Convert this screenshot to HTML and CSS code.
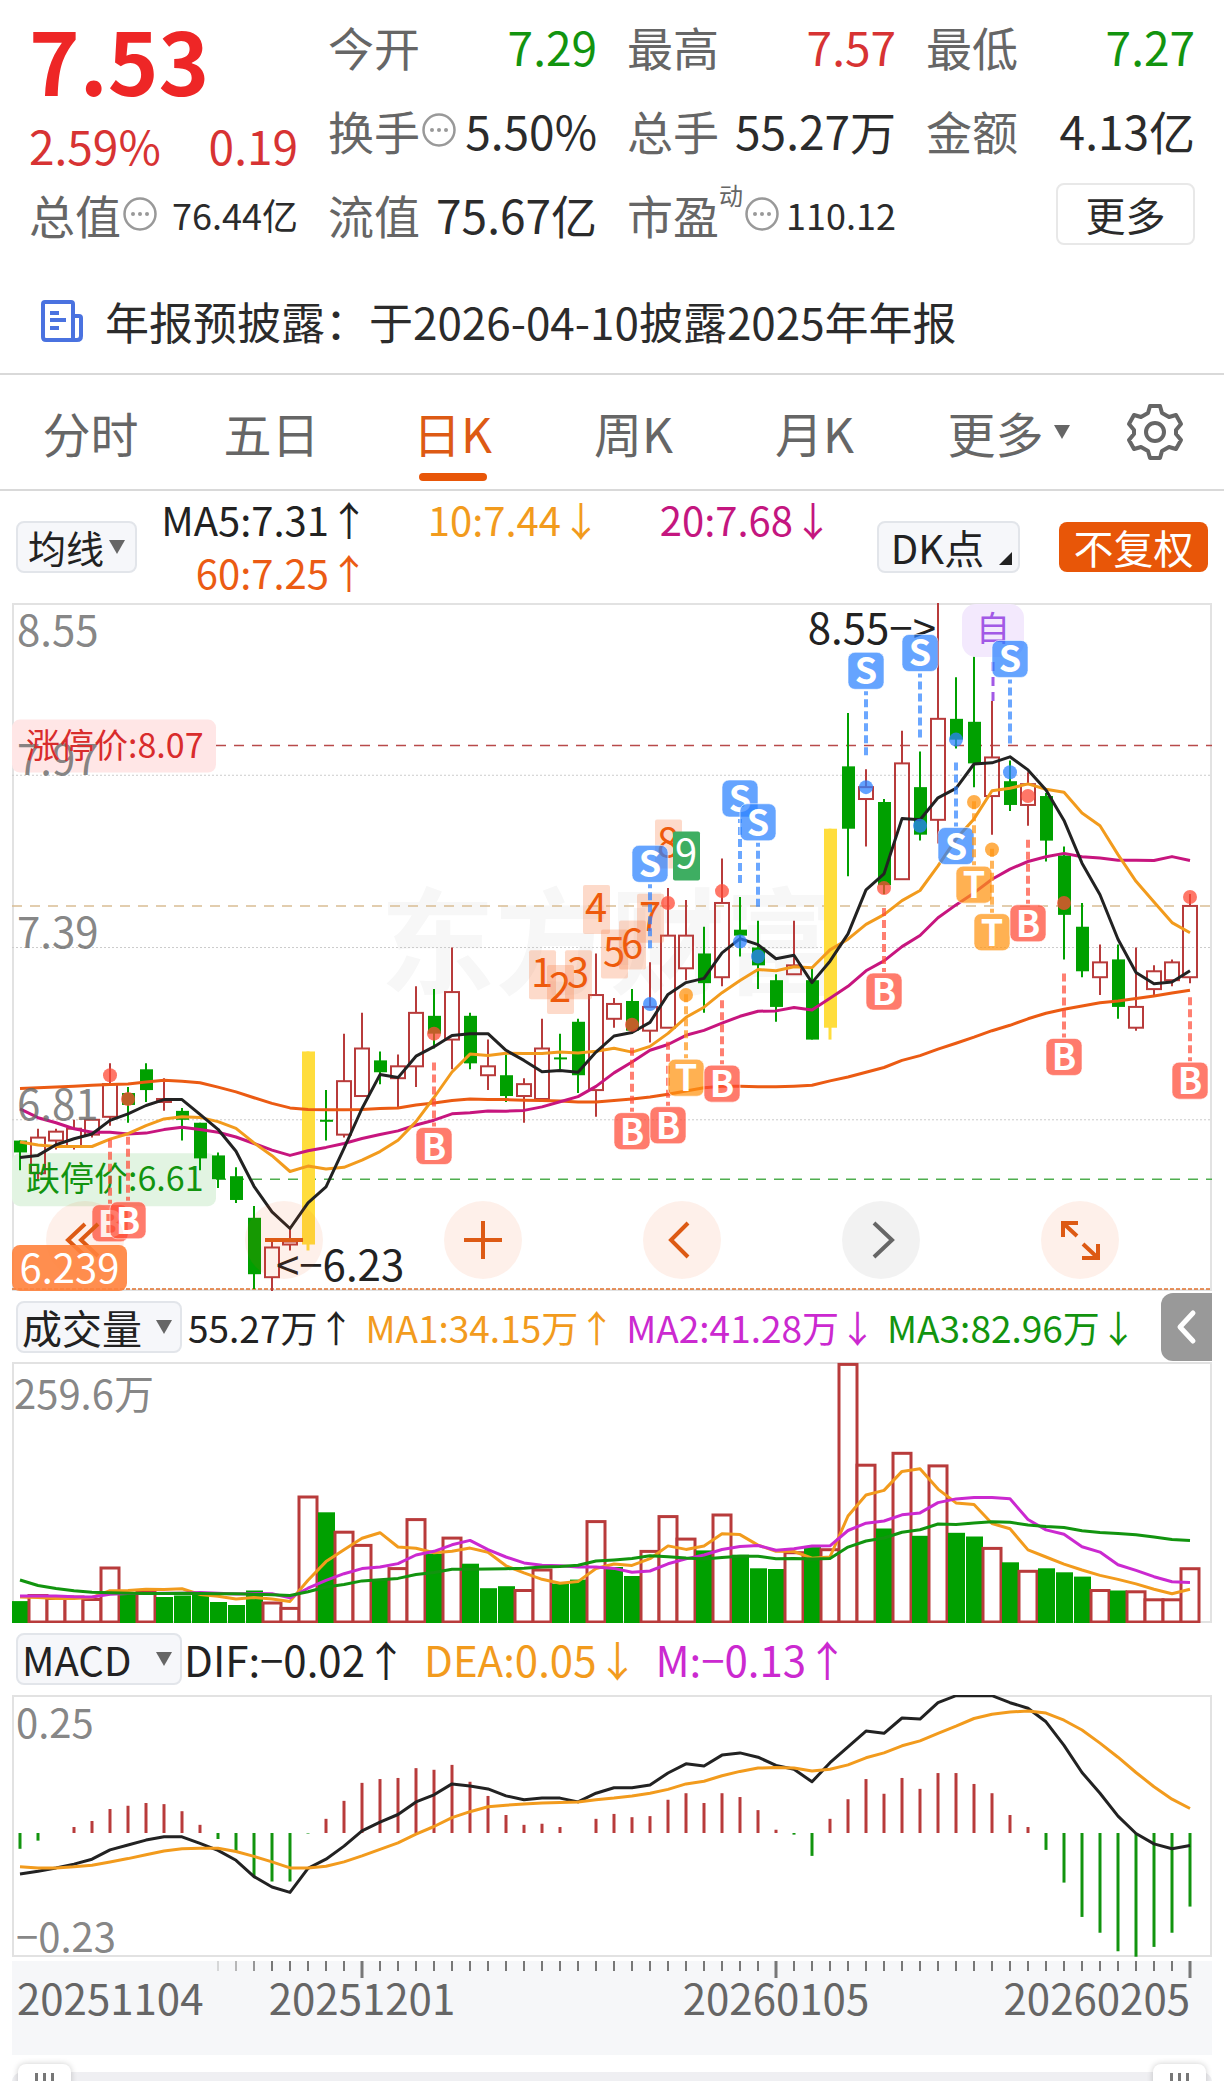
FILE: index.html
```html
<!DOCTYPE html>
<html lang="zh-CN">
<head>
    <meta charset="UTF-8">
    <meta name="viewport" content="width=device-width, initial-scale=1.0">
    <title>日K</title>
    <link rel="stylesheet" href="styles.css">
</head>
<body>
    <svg class="defs" width="0" height="0">
        <symbol id="dots" viewBox="0 0 34 34">
            <circle cx="17" cy="17" r="15.5" fill="none" stroke="#999" stroke-width="2.5"/>
            <circle cx="10" cy="17" r="2" fill="#999"/>
            <circle cx="17" cy="17" r="2" fill="#999"/>
            <circle cx="24" cy="17" r="2" fill="#999"/>
        </symbol>
    </svg>

    <header class="quote">
        <div class="price-box">
            <div class="price">7.53</div>
            <div class="change"><span>2.59%</span><span>0.19</span></div>
        </div>
        <div class="cell"><span class="label">今开</span><span class="down">7.29</span></div>
        <div class="cell"><span class="label">最高</span><span class="up">7.57</span></div>
        <div class="cell"><span class="label">最低</span><span class="down">7.27</span></div>
        <div class="cell"><span class="label">换手<svg class="dots"><use href="#dots"/></svg></span><span>5.50%</span></div>
        <div class="cell"><span class="label">总手</span><span>55.27万</span></div>
        <div class="cell"><span class="label">金额</span><span>4.13亿</span></div>
        <div class="cell"><span class="label">总值<svg class="dots"><use href="#dots"/></svg></span><span class="small">76.44亿</span></div>
        <div class="cell"><span class="label">流值</span><span>75.67亿</span></div>
        <div class="cell"><span class="label">市盈<span class="sup">动</span><svg class="dots"><use href="#dots"/></svg></span><span class="small">110.12</span></div>
        <div class="cell end"><button class="more">更多</button></div>
    </header>

    <a class="notice" href="#">
        <svg width="42" height="42" viewBox="0 0 42 42" fill="none" stroke="#4a72e0" stroke-width="4" stroke-linejoin="round">
            <path d="M32 38V4Q32 2 30 2H4Q2 2 2 4V37Q2 40 5 40H36Q40 40 40 36V18Q40 16 38 16H33"/>
            <path d="M9 13H18M9 20H25M9 28H18"/>
        </svg>
        <span>年报预披露：于2026-04-10披露2025年年报</span>
    </a>

    <nav class="tabs">
        <button>分时</button>
        <button>五日</button>
        <button class="active">日K</button>
        <button>周K</button>
        <button>月K</button>
        <button>更多<i class="caret"></i></button>
        <button aria-label="设置">
            <svg width="58" height="58" viewBox="0 0 58 58" fill="none" stroke="#666" stroke-width="4" stroke-linejoin="round">
                <path d="M24 3H34L36 10L43 14L50 12L55 21L50 27V31L55 37L50 46L43 44L36 48L34 55H24L22 48L15 44L8 46L3 37L8 31V27L3 21L8 12L15 14L22 10Z"/>
                <circle cx="29" cy="29" r="9"/>
            </svg>
        </button>
    </nav>

    <section class="ma-bar">
        <span class="dropdown"><select aria-label="均线"><option>均线</option></select></span>
        <div class="ma-list">
            <span class="c-black">MA5:7.31↑</span>
            <span class="c-orange">10:7.44↓</span>
            <span class="c-pink">20:7.68↓</span>
            <span class="c-deep">60:7.25↑</span>
        </div>
        <button class="dk">DK点</button>
        <button class="adjust">不复权</button>
    </section>

    <section class="chart">
        <svg id="kline" viewBox="0 0 1200 688"></svg>
        <div class="tools">
            <button aria-label="最早"><svg viewBox="0 0 78 78"><path d="M39 23L22 39L39 55M52 23L35 39L52 55"/></svg></button>
            <button aria-label="缩小"><svg viewBox="0 0 78 78"><path d="M20 39H58"/></svg></button>
            <button aria-label="放大"><svg viewBox="0 0 78 78"><path d="M20 39H58M39 20V58"/></svg></button>
            <button aria-label="向左"><svg viewBox="0 0 78 78"><path d="M45 22L28 39L45 56"/></svg></button>
            <button class="off" aria-label="向右"><svg viewBox="0 0 78 78"><path d="M32 22L50 39L32 56"/></svg></button>
            <button aria-label="全屏"><svg viewBox="0 0 78 78"><path d="M22 36V22H37M22 22L36 35M57 43V57H41M57 57L42 43"/></svg></button>
        </div>
        <span class="low-tag">6.239</span>
    </section>

    <section class="sub-bar volume-bar">
        <span class="dropdown wide"><select aria-label="副图一"><option>成交量</option></select></span>
        <span class="c-black">55.27万↑</span>
        <span class="c-orange">MA1:34.15万↑</span>
        <span class="c-violet">MA2:41.28万↓</span>
        <span class="c-green">MA3:82.96万↓</span>
        <button class="drawer" aria-label="展开">
            <svg width="24" height="36" viewBox="0 0 24 36" fill="none" stroke="#fff" stroke-width="5" stroke-linecap="round" stroke-linejoin="round"><path d="M18 4L5 18L18 32"/></svg>
        </button>
    </section>
    <section class="chart"><svg id="volume" viewBox="0 0 1200 261"></svg></section>

    <section class="sub-bar macd-bar">
        <span class="dropdown wide"><select aria-label="副图二"><option>MACD</option></select></span>
        <span class="c-black">DIF:−0.02↑</span>
        <span class="c-orange">DEA:0.05↓</span>
        <span class="c-violet">M:−0.13↑</span>
    </section>
    <section class="chart"><svg id="macd" viewBox="0 0 1200 262"></svg></section>

    <section class="chart axis"><svg id="axis" viewBox="0 0 1200 94"></svg></section>

    <div class="range">
        <div class="track">
            <button class="handle" aria-label="起点"><i></i><i></i><i></i></button>
            <button class="handle" aria-label="终点"><i></i><i></i><i></i></button>
        </div>
    </div>

    <script src="charts.js"></script>
</body>
</html>
```

FILE: styles.css
```css
* {
    box-sizing: border-box;
}
body {
    margin: 0;
    background: #fff;
    color: #2b2b2b;
    font-family: "Noto Sans CJK SC", sans-serif;
    font-size: 40px;
    line-height: 1;
}
button, select {
    font: inherit;
    color: inherit;
    border: none;
    background: none;
    padding: 0;
    margin: 0;
    cursor: pointer;
}
svg {
    display: block;
}
.defs {
    position: absolute;
}
.c-black { color: #222; }
.c-orange { color: #f29b1d; }
.c-pink { color: #c4167f; }
.c-deep { color: #eb5b13; }
.c-violet { color: #cb29d0; }
.c-green { color: #12940f; }

/* quote header */
.quote {
    display: grid;
    grid-template-columns: repeat(4, 1fr);
    grid-auto-rows: 84px;
    column-gap: 30px;
    padding: 4px 29px 0;
    font-size: 46px;
}
.price-box {
    grid-row: span 2;
    display: flex;
    flex-direction: column;
    justify-content: space-between;
    padding: 12px 0 4px;
    color: #d73333;
}
.price {
    color: #ee2626;
    font-size: 86px;
    font-weight: 700;
}
.change {
    display: flex;
    justify-content: space-between;
}
.cell {
    display: flex;
    align-items: center;
    justify-content: space-between;
    white-space: nowrap;
}
.cell.end {
    justify-content: flex-end;
}
.label {
    display: flex;
    align-items: center;
    color: #666;
}
.dots {
    width: 34px;
    height: 34px;
    margin-left: 2px;
}
.sup {
    align-self: flex-start;
    margin-top: -8px;
    font-size: 24px;
}
.small {
    font-size: 36px;
}
.up { color: #d73333; }
.down { color: #12940f; }
.more {
    width: 139px;
    height: 62px;
    border: 2px solid #e8e8e8;
    border-radius: 8px;
    font-size: 40px;
    line-height: 54px;
}

/* notice */
.notice {
    display: flex;
    align-items: center;
    gap: 22px;
    height: 117px;
    padding: 12px 41px 0;
    color: #2b2b2b;
    font-size: 44px;
    text-decoration: none;
    white-space: nowrap;
}

/* period tabs */
.tabs {
    display: grid;
    grid-template-columns: repeat(5, 181fr) 207fr 86fr;
    height: 118px;
    padding-right: 26px;
    border-top: 2px solid #d9d9d9;
    border-bottom: 2px solid #d9d9d9;
    color: #666;
    font-size: 48px;
}
.tabs button {
    position: relative;
    display: flex;
    align-items: center;
    justify-content: center;
}
.tabs .active {
    color: #dd5a14;
}
.tabs .active::after {
    content: "";
    position: absolute;
    bottom: 8px;
    width: 68px;
    height: 8px;
    border-radius: 4px;
    background: #e85608;
}
.caret, .dropdown::after {
    content: "";
    border: 8px solid transparent;
    border-top: 14px solid #666;
    border-bottom: none;
}
.caret {
    margin-left: 10px;
}

/* indicator rows */
.dropdown {
    display: flex;
    align-items: center;
    justify-content: space-between;
    width: 121px;
    height: 52px;
    padding: 0 10px;
    border: 2px solid #e2e5ea;
    border-radius: 8px;
    background: #f6f7fa;
    color: #222;
    font-size: 38px;
}
.dropdown select {
    appearance: none;
    line-height: 48px;
}
.dropdown::after {
    pointer-events: none;
}
.dropdown.wide {
    width: 166px;
    padding: 0 8px 0 4px;
    font-size: 40px;
}
.ma-bar {
    display: flex;
    align-items: center;
    height: 112px;
    padding: 0 16px;
}
.ma-list {
    flex: 1;
    display: grid;
    grid-template-columns: repeat(3, 232px);
    justify-content: start;
    row-gap: 13px;
    padding-bottom: 4px;
    font-size: 40px;
    text-align: right;
    white-space: nowrap;
}
.dk {
    position: relative;
    width: 143px;
    height: 52px;
    padding-right: 22px;
    border: 2px solid #e2e5ea;
    border-radius: 8px;
    background: #f6f7fa;
    color: #222;
    line-height: 44px;
}
.dk::after {
    content: "";
    position: absolute;
    right: 6px;
    bottom: 6px;
    border-left: 13px solid transparent;
    border-bottom: 13px solid #222;
}
.adjust {
    width: 149px;
    height: 50px;
    margin-left: 39px;
    border-radius: 8px;
    background: #e85608;
    color: #fff;
    line-height: 46px;
}
.sub-bar {
    position: relative;
    display: flex;
    align-items: center;
    height: 72px;
    padding: 0 12px 0 16px;
    line-height: 44px;
    white-space: nowrap;
}
.volume-bar {
    gap: 11px;
    height: 71px;
    font-size: 37px;
}
.volume-bar .dropdown {
    margin-right: -5px;
}
.macd-bar {
    gap: 17px;
    font-size: 42px;
}
.macd-bar .dropdown {
    margin-right: -15px;
}
.drawer {
    position: absolute;
    right: 12px;
    top: 2px;
    display: flex;
    align-items: center;
    justify-content: center;
    width: 51px;
    height: 68px;
    border-radius: 12px 0 0 12px;
    background: #999;
}

/* charts */
.chart {
    position: relative;
    margin: 0 12px;
}
.chart > svg {
    width: 100%;
    height: auto;
}
.chart text {
    font-size: 42px;
}
.chart .axis-label {
    fill: #666;
    fill-opacity: 0.8;
}
.chart .size-34 { font-size: 34px; }
.chart .size-40 { font-size: 40px; }
.chart .tag-text {
    font-size: 36px;
    font-weight: 700;
    fill: #fff;
    text-anchor: middle;
}
.chart .td-text {
    font-size: 40px;
    text-anchor: middle;
}
.chart .watermark {
    font-size: 115px;
    font-weight: 700;
    fill: #f7f7f7;
}
.tools {
    position: absolute;
    left: 34px;
    right: 93px;
    bottom: 12px;
    display: flex;
    justify-content: space-between;
}
.tools button {
    width: 78px;
    height: 78px;
    border-radius: 50%;
    background: rgba(240, 90, 20, 0.09);
    stroke: #dd5a14;
}
.tools .off {
    background: rgba(0, 0, 0, 0.05);
    stroke: #666;
}
.tools svg {
    fill: none;
    stroke-width: 4;
}
.low-tag {
    position: absolute;
    left: 0;
    bottom: 0;
    width: 115px;
    height: 46px;
    border-radius: 8px;
    background: rgba(255, 130, 60, 0.9);
    color: #fff;
    line-height: 43px;
    text-align: center;
}
.axis {
    margin-top: 4px;
    background: #f6f7f9;
}

/* range slider, cut off by the screen edge */
.range {
    height: 26px;
    padding: 17px 12px 0;
    overflow: hidden;
}
.track {
    display: flex;
    justify-content: space-between;
    height: 40px;
    padding: 0 6px;
    border-radius: 10px;
    background: #efeff2;
}
.handle {
    display: flex;
    justify-content: center;
    gap: 5px;
    width: 53px;
    height: 50px;
    margin-top: -8px;
    padding-top: 9px;
    border-radius: 8px;
    background: #fff;
    box-shadow: 0 0 6px rgba(0, 0, 0, 0.2);
}
.handle i {
    width: 3px;
    height: 30px;
    background: #777;
}
```

FILE: charts.js
```js
// prices in cents: [open, high, low, close]
const candles = [
    [674,674,664,670],[663,678,661,675],[674,678,671,677],[672,681,671,678],[676,681,675,681],[682,700,679,693],
    [690,692,680,686],[698,700,687,691],[687,695,684,688],[684,685,674,681],[680,680,664,668],[669,670,658,661],
    [662,665,653,654],[648,652,624,629],[628,641,623,638],[639,645,637,640],[639,704,637,704],[681,691,674,681],
    [676,710,675,694],[689,717,689,705],[701,704,693,697],[695,703,685,699],[699,726,692,717],[716,725,705,710],
    [708,739,698,724],[716,717,698,700],[696,708,691,699],[696,703,687,689],[689,695,680,693],[688,715,687,705],
    [702,710,698,702],[714,715,690,696],[691,737,682,723],[715,722,712,720],[721,725,710,711],[711,734,707,719],
    [712,759,712,743],[732,755,728,743],[737,746,717,727],[729,769,726,754],[745,756,736,743],[739,748,725,733],
    [728,730,714,719],[730,748,730,733],[728,732,708,708],[712,779,708,779],[800,818,763,779],[789,799,773,793],
    [788,789,757,760],[762,812,762,801],[793,805,775,777],[782,855,774,816],[816,830,806,809],[815,837,793,801],
    [790,822,777,803],[795,802,785,787],[787,798,780,794],[790,791,768,775],[770,773,735,750],[746,754,729,731],
    [729,740,723,734],[735,740,715,719],[712,739,711,719],[725,733,723,731],[728,735,726,734],[729,757,727,753]
];
const limitUp = [16, 45];

// volume in 万
const volumes = [
    21.9,28.5,25.5,27,24.5,56,30,31.5,26,27.5,28,21,18,32.5,21,15.6,127,110.7,91.8,78.6,43.4,55.4,
    104.4,69.3,85.9,59.3,34.8,36.8,33.5,54,39.4,43.4,102.4,56,47,72.6,107.4,84.9,72.6,109,68.3,54.7,54,71.3,
    75.9,74.3,259.6,158.8,94.5,170.7,87.2,158.1,90.2,86.5,75.6,60.7,52.7,54.7,50.7,46.4,33.5,32.5,32.2,24.2,24.2,55.27
];

const ma60 = [
    691.5,691.8,692,692.3,692.6,692.9,693,693.7,694.3,694,693.5,692,690.4,688.4,686.5,685,684.5,684.4,684.4,684.5,684.8,685,
    686,686.7,687.5,688,687.8,687.8,687.6,687.5,687.3,687,687,687.5,688,688.7,689.6,690.7,691.8,692.3,692.3,692.1,692.1,692.3,
    692.6,694.1,695.4,697,698.6,701,702.6,704.8,706.8,708.8,711,712.8,715,716.9,718.2,719.3,720.4,721,721.8,722.7,723.7,724.6
];

// MACD values in thousandths
const bars = [
    -29,-14,0,11,22,44,50,55,53,40,15,-11,-34,-80,-89,-89,-1,26,59,92,99,101,119,116,125,94,68,33,15,17,11,0,26,
    35,29,31,61,73,55,73,66,42,6,-3,-42,26,62,99,72,101,81,110,110,90,73,33,11,-31,-91,-154,-183,-217,-227,-209,-183,-135
];
const dea = [
    -62,-64,-64,-62,-59,-53,-47,-40,-33,-29,-28,-28,-34,-43,-53,-64,-64,-61,-53,-42,-30,-18,-2,12,28,39,48,51,53,55,56,57,61,
    64,68,73,80,90,95,105,113,119,120,119,114,117,125,138,147,160,169,183,196,210,218,222,224,220,207,189,165,139,111,85,62,45
];
const dif = [
    -75,-70,-64,-57,-48,-31,-22,-13,-7,-7,-19,-32,-50,-80,-99,-109,-65,-48,-24,4,20,34,57,70,90,86,81,68,61,64,64,57,73,
    83,83,88,110,127,123,143,147,139,124,117,94,129,158,187,183,211,209,239,252,252,252,239,229,204,161,111,73,31,-1,-20,-29,-23
];

// [candle, kind, price of the dot, price of the tag]
const signals = [
    [5,'B',696,646],[6,'B',688,647],[23,'B',710,672],[34,'B',713,677],[36,'B',754,679],[37,'T',723,695],[39,'B',758,693],
    [35,'S',720,767],[40,'S',741,789],[41,'S',736,781],[47,'S',793,832],[50,'S',780,838],[55,'S',798,836],
    [52,'S',809,773],[48,'B',759,724],[53,'T',788,760],[54,'T',772,744],[56,'B',790,747],[58,'B',754,702],[65,'B',756,694]
];
// nine-turn count, from candle 29 on
const turns = [730, 725, 730, 752, 737, 740, 749, 774, 770];

const RED = '#b83b3b';
const GREEN = '#00a000';
const colors = { B: '#ff4a36', S: '#2c82ff', T: '#ff9412' };

const x = i => 8 + 18 * i;
const y = p => (855 - p) * 2.97;

function rect(left, top, w, h, attrs) {
    return `<rect x="${left}" y="${top}" width="${w}" height="${h}" ${attrs}/>`;
}
function line(x1, y1, x2, y2, color, attrs = '') {
    return `<line x1="${x1}" y1="${y1}" x2="${x2}" y2="${y2}" stroke="${color}" ${attrs}/>`;
}
function text(left, top, str, attrs) {
    return `<text x="${left}" y="${top}" ${attrs}>${str}</text>`;
}
function curve(values, scale, color) {
    const points = values.map((v, i) => x(i) + ',' + scale(v).toFixed(1)).join(' ');
    return `<polyline points="${points}" fill="none" stroke="${color}" stroke-width="3" stroke-linejoin="round"/>`;
}
function frame(h) {
    return rect(1, 1, 1198, h - 2, 'fill="none" stroke="#e2e2e2" stroke-width="2"');
}
// moving average; head holds the values that need older data
function average(values, n, head) {
    return values.map((v, i) => i < n - 1 ? head[i] : values.slice(i - n + 1, i + 1).reduce((a, b) => a + b) / n);
}

function drawKline() {
    let out = text(368, 382, '东方财富', 'class="watermark"') + frame(688);

    [797, 739, 681].forEach(p => {
        out += line(0, y(p), 1200, y(p), '#ccc', 'stroke-dasharray="2 2"');
    });
    out += line(0, y(753), 1200, y(753), '#d9bd94', 'stroke-width="1.5" stroke-dasharray="10 8"');
    out += line(204, y(807), 1200, y(807), '#b84a4a', 'stroke-width="1.5" stroke-dasharray="10 8"');
    out += line(204, y(661), 1200, y(661), '#4fae4f', 'stroke-width="1.5" stroke-dasharray="10 8"');
    out += line(0, 686, 1200, 686, '#e0702c', 'stroke-width="1.5" stroke-dasharray="4 2"');

    out += rect(0, y(807) - 26, 204, 53, 'rx="8" fill="#ffe6e6"');
    out += rect(0, y(661) - 26, 204, 53, 'rx="8" fill="#e2f4e2"');

    candles.forEach(([open, high, low, close], i) => {
        const top = y(Math.max(open, close));
        const h = Math.max(y(Math.min(open, close)) - top, 2);
        const up = close > open;
        if (limitUp.includes(i)) {
            out += line(x(i), top, x(i), y(low), '#ffdd3c', 'stroke-width="3"');
            out += rect(x(i) - 6, top, 13, h, 'fill="#ffdd3c"');
        } else if (up) {
            out += line(x(i), y(high), x(i), top, RED, 'stroke-width="2"');
            out += line(x(i), top + h, x(i), y(low), RED, 'stroke-width="2"');
            out += rect(x(i) - 7, top, 14, h, `fill="none" stroke="${RED}" stroke-width="2"`);
        } else {
            out += line(x(i), y(high), x(i), y(low), GREEN, 'stroke-width="2"');
            out += rect(x(i) - 6, top, 13, h, `fill="${GREEN}"`);
        }
    });

    const closes = candles.map(c => c[3]);
    out += curve(ma60, y, '#eb5b13');
    out += curve(average(closes, 20, [684.7,681.7,680,678,676.8,676.8,676.2,676.5,677.7,678.5,677.7,676.8,675.2,673,670.8,669,670.6,671.7,673]), y, '#c7157e');
    out += curve(average(closes, 10, [673.5,672.5,672,672,672,674.5,676.3,679,681.3]), y, '#f29b1d');
    out += curve(average(closes, 5, [668.3,669,672.6,674.6]), y, '#222');

    out += text(5, 43, '8.55', 'class="axis-label"');
    out += text(5, y(797), '7.97', 'class="axis-label"');
    out += text(5, y(739), '7.39', 'class="axis-label"');
    out += text(5, y(681), '6.81', 'class="axis-label"');
    out += text(14, y(807) + 12, '涨停价:8.07', 'class="size-34" fill="#d92c2c"');
    out += text(14, y(661) + 12, '跌停价:6.61', 'class="size-34" fill="#12940f"');
    out += text(924, 41, '8.55−&gt;', 'text-anchor="end" fill="#222"');
    out += text(264, 678, '&lt;−6.23', 'fill="#222"');

    // 自选 marker
    out += rect(950, 1, 62, 53, 'rx="14" fill="#f3e9fd"');
    out += text(981, 38, '自', 'class="size-34" text-anchor="middle" fill="#a259e6"');
    out += line(981, 59, 981, 99, '#a259e6', 'stroke-width="3" stroke-dasharray="9 6"');

    turns.forEach((p, n) => {
        const last = n === 8;
        out += rect(x(29 + n) - 13, y(p) - 24, 27, 49, last ? 'rx="2" fill="#3eae62"' : 'rx="2" fill="#f9793f" fill-opacity="0.28"');
        out += text(x(29 + n), y(p) + 13, n + 1, `class="td-text" fill="${last ? '#fff' : '#ee5a0c'}"`);
    });

    signals.forEach(([i, kind, dot, tag]) => {
        const c = colors[kind];
        const cy = y(tag);
        const side = tag < dot ? -1 : 1;
        out += line(x(i), cy + side * 84, x(i), cy + side * 20, c, 'stroke-width="4" stroke-opacity="0.7" stroke-dasharray="8 4"');
        out += `<circle cx="${x(i)}" cy="${y(dot)}" r="7" fill="${c}" fill-opacity="0.75"/>`;
        out += rect(x(i) - 18, cy - 19, 36, 37, `rx="7" fill="${c}" fill-opacity="0.73" stroke="#fff" stroke-opacity="0.6"`);
        out += text(x(i), cy + 13, kind, 'class="tag-text"');
    });

    document.getElementById('kline').innerHTML = out;
}

function drawVolume() {
    const scale = v => 261 - v;
    let out = frame(261);
    volumes.forEach((v, i) => {
        const up = i > 0 && candles[i][3] >= candles[i - 1][3];
        out += up
            ? rect(x(i) - 9, scale(v) + 1, 18, v - 2, `fill="#fff" stroke="${RED}" stroke-width="3"`)
            : rect(x(i) - 8, scale(v), 17, v, `fill="${GREEN}"`);
    });
    out += curve(average(volumes, 5, [26,25.5,24.5,24.5]), scale, '#f29b1d');
    out += curve(average(volumes, 10, [26.9,26.9,26.9,26.2,25.9,28.8,29.5,29.5,29.8]), scale, '#cb29d0');
    out += curve(average(volumes, 20, [43,37.5,34.5,32.2,30.8,30.2,29.8,29.5,29.5,29.8,29.5,29.2,29.2,28.8,28.2,27.5,31.2,36,38.5]), scale, '#12940f');
    out += text(2, 47, '259.6万', 'class="axis-label size-40"');
    document.getElementById('volume').innerHTML = out;
}

function drawMacd() {
    const scale = v => 138 - v * 0.545;
    let out = frame(262);
    bars.forEach((v, i) => {
        out += line(x(i), 138, x(i), scale(v), v > 0 ? RED : '#12940f', 'stroke-width="3"');
    });
    out += curve(dif, scale, '#222') + curve(dea, scale, '#f29b1d');
    out += text(4, 43, '0.25', 'class="axis-label size-40"');
    out += text(4, 257, '−0.23', 'class="axis-label size-40"');
    document.getElementById('macd').innerHTML = out;
}

function drawAxis() {
    let out = '';
    for (let i = 11; i < 66; i++) {
        const major = i === 19 || i === 42 || i === 65;
        const fade = Math.min((i - 10) / 4, 1);
        out += line(x(i), 0, x(i), major ? 17 : 10, '#777', `stroke-width="${major ? 3 : 2}" stroke-opacity="${fade}"`);
    }
    out += text(5, 54, '20251104', 'fill="#666"');
    out += text(350, 54, '20251201', 'text-anchor="middle" fill="#666"');
    out += text(764, 54, '20260105', 'text-anchor="middle" fill="#666"');
    out += text(1178, 54, '20260205', 'text-anchor="end" fill="#666"');
    document.getElementById('axis').innerHTML = out;
}

drawKline();
drawVolume();
drawMacd();
drawAxis();
```
